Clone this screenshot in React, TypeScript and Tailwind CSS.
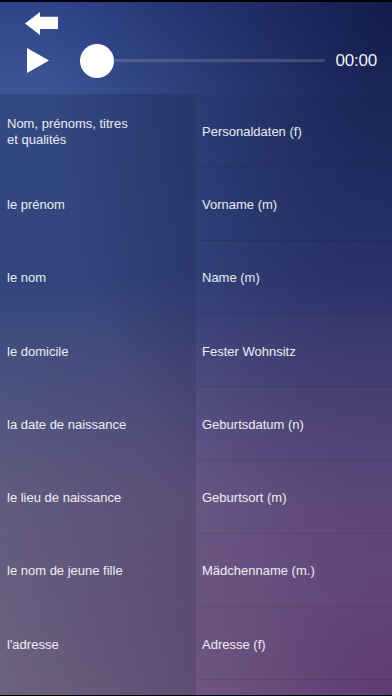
const rows: [string, string][] = [
  ['Nom, prénoms, titres\net qualités', 'Personaldaten (f)'],
  ['le prénom', 'Vorname (m)'],
  ['le nom', 'Name (m)'],
  ['le domicile', 'Fester Wohnsitz'],
  ['la date de naissance', 'Geburtsdatum (n)'],
  ['le lieu de naissance', 'Geburtsort (m)'],
  ['le nom de jeune fille', 'Mädchenname (m.)'],
  ["l'adresse", 'Adresse (f)'],
  ['', ''],
];

function BackArrow() {
  return (
    <svg width="33" height="23" viewBox="0 0 33 23" fill="white">
      <path d="M0 11.5 L15 0 L15 4.7 L33 4.7 L33 17 L15 17 L15 23 Z" />
    </svg>
  );
}

function PlayIcon() {
  return (
    <svg width="22" height="25" viewBox="0 0 22 25" fill="white">
      <path d="M0 0 L22 12.5 L0 25 Z" />
    </svg>
  );
}

export default function App() {
  return (
    <div className="h-[696px] w-full overflow-hidden flex flex-col font-['Liberation_Sans',Arial,sans-serif] text-white bg-[radial-gradient(circle_at_100%_100%,rgba(88,45,112,0.8)_0%,rgba(88,45,112,0)_62%),radial-gradient(ellipse_at_100%_0%,rgba(14,22,66,0.85)_0%,rgba(14,22,66,0)_62%),linear-gradient(to_bottom,#30448a_0%,#3e5597_14%,#3c5290_40%,#7a7598_72%,#908698_100%)]">
      <div className="h-[2px] bg-black shrink-0" />
      <header className="h-[92px] shrink-0 flex flex-col">
        <div className="pl-[25px] pt-[10px]">
          <BackArrow />
        </div>
        <div className="mt-[8px] h-[35px] flex items-center pr-[15px]">
          <div className="ml-[27px]">
            <PlayIcon />
          </div>
          <div className="ml-[31px] w-[34px] h-[34px] rounded-full bg-white shrink-0" />
          <div className="flex-1 h-[3px] rounded-full bg-white/15" />
          <span className="ml-[10px] text-[17px] text-white/95 tracking-[-0.2px]">00:00</span>
        </div>
      </header>
      <div className="flex-1 overflow-hidden">
        {rows.map(([fr, de], i) => (
          <div key={i} className="h-[73.3px] flex border-b border-black/15">
            <div className="w-[196px] shrink-0 flex items-center pl-[7px] pt-[3px] bg-[#101530]/20">
              <span className="text-[13px] leading-[16px] text-white/90 whitespace-pre-line">{fr}</span>
            </div>
            <div className="flex-1 flex items-center pl-[6px] pt-[3px] bg-[#101530]/[0.06]">
              <span className="text-[13px] leading-[16px] text-white/90">{de}</span>
            </div>
          </div>
        ))}
      </div>
      <div className="h-px bg-black shrink-0" />
    </div>
  );
}
